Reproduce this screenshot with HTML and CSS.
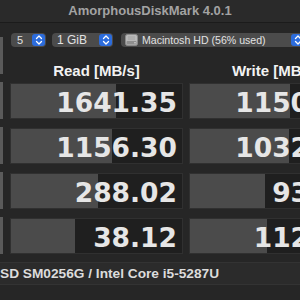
FILE: index.html
```html
<!DOCTYPE html>
<html>
<head>
<meta charset="utf-8">
<link rel="stylesheet" href="styles.css">
</head>
<body>
<div class="window">
  <div class="titlebar">AmorphousDiskMark 4.0.1</div>
  <div class="top">
    <div class="side side-all"></div>
    <div class="top-main">
      <div class="toolbar">
        <div class="popup p-count">
          <span class="label">5</span>
          <span class="stepper"><svg width="8" height="10" viewBox="0 0 8 10"><path d="M1.5 3.5 L4 1 L6.5 3.5 M1.5 6.5 L4 9 L6.5 6.5" fill="none" stroke="#fff" stroke-width="1.3" stroke-linecap="round" stroke-linejoin="round"/></svg></span>
        </div>
        <div class="popup p-size">
          <span class="label">1 GiB</span>
          <span class="stepper"><svg width="8" height="10" viewBox="0 0 8 10"><path d="M1.5 3.5 L4 1 L6.5 3.5 M1.5 6.5 L4 9 L6.5 6.5" fill="none" stroke="#fff" stroke-width="1.3" stroke-linecap="round" stroke-linejoin="round"/></svg></span>
        </div>
        <div class="popup p-disk">
          <span class="disk-icon"><svg width="13" height="12" viewBox="0 0 13 12"><rect x="0.5" y="0.5" width="12" height="11" rx="2" fill="#b9b9b9" stroke="#8a8a8a"/><rect x="1.5" y="7" width="10" height="3.5" rx="1" fill="#8f8f8f"/><circle cx="10" cy="8.8" r="0.8" fill="#d8d8d8"/><path d="M3 3 H10 M3 5 H10" stroke="#9d9d9d" stroke-width="0.8"/></svg></span>
          <span class="label">Macintosh HD (56% used)</span>
          <span class="stepper"><svg width="8" height="10" viewBox="0 0 8 10"><path d="M1.5 3.5 L4 1 L6.5 3.5 M1.5 6.5 L4 9 L6.5 6.5" fill="none" stroke="#fff" stroke-width="1.3" stroke-linecap="round" stroke-linejoin="round"/></svg></span>
        </div>
      </div>
      <div class="header">
        <div class="col-title">Read [MB/s]</div>
        <div class="col-title">Write [MB/s]</div>
      </div>
    </div>
  </div>
  <div class="rows">
    <div class="row">
      <div class="side"></div>
      <div class="cell"><div class="fill" style="width:105px"></div><span class="val">1641.35</span></div>
      <div class="cell"><div class="fill" style="width:100px"></div><span class="val">1150.86</span></div>
    </div>
    <div class="row">
      <div class="side"></div>
      <div class="cell"><div class="fill" style="width:101px"></div><span class="val">1156.30</span></div>
      <div class="cell"><div class="fill" style="width:99px"></div><span class="val">1032.41</span></div>
    </div>
    <div class="row">
      <div class="side"></div>
      <div class="cell"><div class="fill" style="width:87px"></div><span class="val">288.02</span></div>
      <div class="cell"><div class="fill" style="width:75px"></div><span class="val">93.12</span></div>
    </div>
    <div class="row">
      <div class="side"></div>
      <div class="cell"><div class="fill" style="width:64px"></div><span class="val">38.12</span></div>
      <div class="cell"><div class="fill" style="width:77px"></div><span class="val">112.08</span></div>
    </div>
  </div>
  <div class="footer"><span class="info">SD SM0256G / Intel Core i5-5287U</span></div>
</div>
</body>
</html>
```
FILE: styles.css
```css
html, body {
  margin: 0;
  padding: 0;
  background: #1e1e1e;
}
.window {
  width: 300px;
  height: 300px;
  overflow: hidden;
  background: #262626;
  font-family: "Liberation Sans", Arial, sans-serif;
  color: #e4e4e4;
}
.titlebar {
  height: 22px;
  line-height: 22px;
  text-align: center;
  font-size: 13px;
  font-weight: bold;
  color: #a3a3a3;
  background: #2a2a2a;
  border-bottom: 1px solid #1b1b1b;
}
.top {
  display: flex;
  height: 60px;
}
.side {
  width: 3px;
  flex: none;
  background: #5a5a5a;
  margin-right: 7px;
}
.side-all {
  margin-top: 14px;
  height: 37px;
}
.top-main {
  display: flex;
  flex-direction: column;
}
.toolbar {
  display: flex;
  align-items: center;
  height: 34px;
  padding-left: 1px;
  gap: 6px;
}
.popup {
  display: flex;
  align-items: center;
  height: 14px;
  background: #4b4b4b;
  border-radius: 4px;
  font-size: 11px;
  color: #e2e2e2;
  flex: none;
}
.popup .label {
  flex: 1;
  white-space: nowrap;
  padding-left: 6px;
}
.stepper {
  width: 13px;
  height: 12px;
  margin-right: 1px;
  background: #2c6cdc;
  border-radius: 3px;
  display: flex;
  align-items: center;
  justify-content: center;
}
.p-count { width: 35px; }
.p-size { width: 61px; }
.p-size .label { font-size: 12px; padding-left: 5px; }
.p-disk { width: 184px; margin-left: 2px; }
.p-disk .label { padding-left: 4px; font-size: 10.6px; }
.disk-icon {
  display: flex;
  padding-left: 4px;
}
.header {
  display: flex;
  height: 26px;
  align-items: center;
}
.col-title {
  width: 173px;
  text-align: center;
  font-size: 15px;
  font-weight: bold;
  color: #f2f2f2;
  margin-right: 6px;
  white-space: nowrap;
}
.rows {
  display: flex;
  flex-direction: column;
  gap: 9px;
}
.row {
  display: flex;
  height: 36px;
}
.row .side {
  height: 37px;
  margin-top: -1px;
}
.cell {
  position: relative;
  width: 173px;
  flex: none;
  height: 36px;
  box-sizing: border-box;
  background: #1f1f1f;
  border: 1px solid #303030;
  margin-right: 6px;
  display: flex;
  align-items: center;
  justify-content: flex-end;
}
.fill {
  position: absolute;
  left: 0;
  top: 0;
  bottom: 0;
  background: #4b4b4b;
}
.val {
  position: relative;
  font-family: "DejaVu Sans", Verdana, sans-serif;
  font-size: 26.5px;
  font-weight: bold;
  color: #e6e6e6;
  padding-right: 5px;
  padding-top: 3px;
  white-space: nowrap;
}
.footer {
  margin-top: 8px;
  height: 21px;
  background: #2b2b2b;
  border-top: 1px solid #333;
  border-bottom: 1px solid #333;
  display: flex;
  align-items: center;
  white-space: nowrap;
}
.info {
  font-size: 13.7px;
  font-weight: bold;
  color: #dcdcdc;
}
```
